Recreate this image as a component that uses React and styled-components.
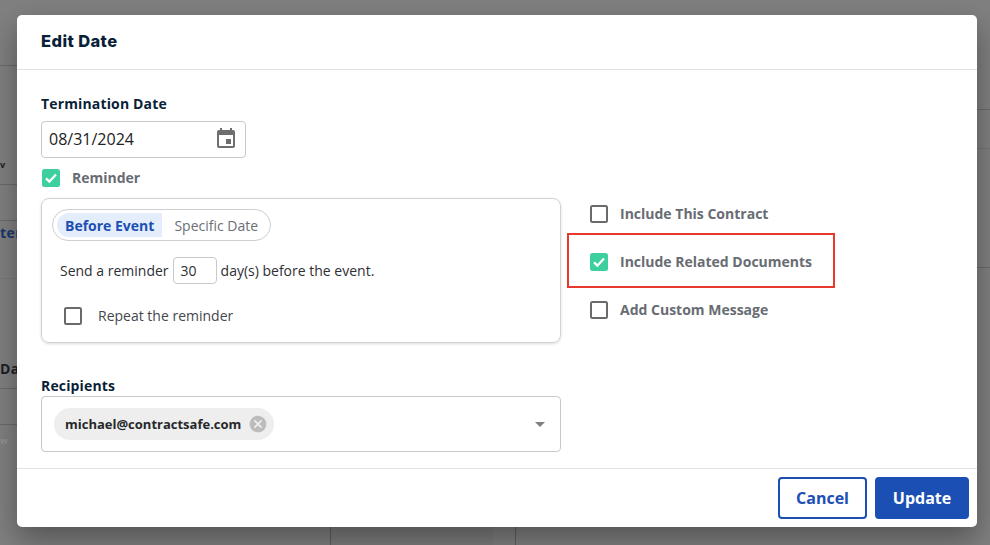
import React from 'react'
import styled, { createGlobalStyle } from 'styled-components'
import { MdEvent, MdCancel, MdArrowDropDown } from 'react-icons/md'

const Global = createGlobalStyle`
  html, body { margin: 0; padding: 0; height: 100%; }
  body { font-family: "Open Sans", "Noto Sans", sans-serif; background: #808080; overflow: hidden; }
  * { box-sizing: border-box; }
`

const Page = styled.div`
  position: relative;
  width: 990px;
  height: 545px;
  overflow: hidden;
  display: flex;
  background: #808080;
`

/* the app behind the overlay, only slivers of it show */
const LeftPane = styled.div`
  width: 330px;
  display: flex;
  flex-direction: column;
`
const MidPane = styled.div`
  width: 186px;
  margin-top: 110px;
  border-left: 1px solid #5f5f5f;
  border-right: 1px solid #5f5f5f;
  padding-right: 22px;
`
const MidShade = styled.div`
  height: 100%;
  background: #00000008;
`
const RightPane = styled.div`
  flex: 1;
  display: flex;
  flex-direction: column;
`
const BackRow = styled.div`
  height: ${p => p.$h}px;
  flex: none;
  border-bottom: 1px solid ${p => p.$line || '#6a6a6a'};
  display: flex;
  align-items: flex-end;
  padding-bottom: ${p => p.$pad || 0}px;
  font-size: ${p => p.$size || 14}px;
  font-weight: 700;
  line-height: 18px;
  letter-spacing: 0.5px;
  color: ${p => p.$color || '#1b1f27'};
`

const Modal = styled.div`
  position: absolute;
  left: 17px;
  top: 15px;
  width: 960px;
  height: 512px;
  background: #fff;
  border-radius: 5px;
  box-shadow: 0 12px 30px rgba(0, 0, 0, 0.36);
  display: flex;
  flex-direction: column;
`
const Header = styled.div`
  height: 55px;
  flex: none;
  padding: 0 24px 2px;
  display: flex;
  align-items: center;
  border-bottom: 1px solid #e2e2e2;
  font-family: Inter, "Noto Sans", sans-serif;
  font-size: 16.5px;
  font-weight: 800;
  letter-spacing: 0.4px;
  color: #0a1f38;
`
const Body = styled.div`
  flex: 1;
  min-height: 0;
  padding: 24px 24px 0;
  display: grid;
  grid-template-columns: 520px 1fr;
  grid-template-rows: auto auto;
  align-content: start;
`
const LeftCol = styled.div`
  display: flex;
  flex-direction: column;
`
const Label = styled.div`
  font-size: 14px;
  font-weight: 700;
  line-height: 20px;
  letter-spacing: 0.15px;
  color: #0a1f38;
  margin-bottom: ${p => p.$gap}px;
  margin-top: ${p => p.$top || 0}px;
`
const DateField = styled.div`
  width: 205px;
  height: 37px;
  border: 1px solid #c9c9c9;
  border-radius: 4px;
  padding: 0 7px;
  display: flex;
  align-items: center;
  justify-content: space-between;
  font-size: 16px;
  color: #222;
  svg { color: #6e6e6e; margin-top: -1px; }
`
const DateText = styled.span`
  margin-bottom: 2px;
`
const CheckRow = styled.div`
  display: flex;
  align-items: center;
  gap: ${p => p.$gap || 12}px;
  font-size: 14px;
  font-weight: ${p => (p.$plain ? 400 : 700)};
  color: ${p => (p.$plain ? '#44474c' : '#686c73')};
`
const RowText = styled.span`
  margin-bottom: 2px;
`
const Box = styled.span`
  width: 18px;
  height: 18px;
  flex: none;
  border-radius: 2.5px;
  display: flex;
  align-items: center;
  justify-content: center;
  background: ${p => (p.$on ? '#3ecf9f' : '#fff')};
  border: ${p => (p.$on ? 'none' : '2px solid #6a6a6a')};
`
const ReminderRow = styled(CheckRow)`
  margin: 10px 0 10px 1px;
  height: 20px;
`
const Card = styled.div`
  width: 520px;
  height: 145px;
  border: 1px solid #d2d2d2;
  border-radius: 8px;
  box-shadow: 0 1px 3px rgba(0, 0, 0, 0.14);
  padding: 10px;
`
const Tabs = styled.div`
  display: flex;
  align-items: center;
  height: 32px;
  width: 219px;
  padding: 0 4px;
  border: 1px solid #cfcfcf;
  border-radius: 16px;
`
const Tab = styled.div`
  height: 24px;
  padding: 0 ${p => (p.$active ? 8 : 12)}px;
  display: flex;
  align-items: center;
  white-space: nowrap;
  font-size: 14px;
  font-weight: ${p => (p.$active ? 700 : 400)};
  color: ${p => (p.$active ? '#1c4fb3' : '#6b6f76')};
  background: ${p => (p.$active ? '#e4edfb' : 'transparent')};
  border-radius: ${p => (p.$active ? '12px 0 0 12px' : '0')};
`
const SendRow = styled.div`
  display: flex;
  align-items: center;
  gap: 4px;
  margin: 16px 0 0 8px;
  font-size: 14px;
  color: #2e3034;
`
const DaysInput = styled.div`
  width: 44px;
  height: 27px;
  border: 1px solid #c9c9c9;
  border-radius: 4px;
  padding-left: 7px;
  display: flex;
  align-items: center;
`
const RepeatRow = styled(CheckRow)`
  margin: 22px 0 0 12px;
`
const RightCol = styled.div`
  padding: 96px 0 0 29px;
  display: flex;
  flex-direction: column;
`
const OptionRow = styled(CheckRow)`
  position: relative;
  width: 245px;
  height: 48px;
  ${p =>
    p.$flag &&
    `&::after {
      content: '';
      position: absolute;
      left: -23px;
      right: 0;
      top: -5px;
      bottom: -2px;
      border: 2px solid #e8392c;
    }`}
`
const RecipientBlock = styled.div`
  grid-column: 1 / 2;
`
const Select = styled.div`
  width: 520px;
  height: 56px;
  border: 1px solid #c9c9c9;
  border-radius: 4px;
  padding: 0 8px 0 12px;
  display: flex;
  align-items: center;
  justify-content: space-between;
  > svg { color: #808080; }
`
const Chip = styled.div`
  height: 32px;
  width: 220px;
  border-radius: 16px;
  background: #eeeeee;
  padding: 0 6px 0 11px;
  display: flex;
  align-items: center;
  justify-content: space-between;
  font-size: 13px;
  font-weight: 700;
  color: #26282b;
  svg { color: #bcbcbc; }
`
const Footer = styled.div`
  height: 59px;
  flex: none;
  border-top: 1px solid #e2e2e2;
  padding: 8px 8px 0 0;
  display: flex;
  justify-content: flex-end;
  gap: 8px;
`
const Button = styled.button`
  width: ${p => (p.$primary ? 94 : 89)}px;
  height: 42px;
  border-radius: 4px;
  border: 2px solid #1c4fb3;
  background: ${p => (p.$primary ? '#1c4fb3' : '#fff')};
  color: ${p => (p.$primary ? '#fff' : '#1c4fb3')};
  font-family: inherit;
  font-size: 16px;
  font-weight: 700;
  padding: 0;
`

const Check = ({ on }) => (
  <Box $on={on}>
    {on && (
      <svg width="14" height="14" viewBox="0 0 14 14" fill="none">
        <path d="M2 7.4 5.4 10.6 12 3.6" stroke="#fff" strokeWidth="2.2" />
      </svg>
    )}
  </Box>
)

export default function App() {
  return (
    <Page>
      <Global />
      <LeftPane>
        <BackRow $h={66} />
        <BackRow $h={119} $pad={10} $size={9}>v</BackRow>
        <BackRow $h={36} />
        <BackRow $h={58} $line="#797979" $pad={36} $color="#1a3670">ter</BackRow>
        <BackRow $h={110} $pad={10}>Da</BackRow>
        <BackRow $h={36} />
        <BackRow $h={26} $size={9} $color="#939393" $line="transparent">w</BackRow>
      </LeftPane>
      <MidPane>
        <MidShade />
      </MidPane>
      <RightPane>
        <BackRow $h={110} />
        <BackRow $h={39} $line="#747474" />
        <BackRow $h={119} $line="#6a6a6a" />
      </RightPane>

      <Modal>
        <Header>Edit Date</Header>
        <Body>
          <LeftCol>
            <Label $gap={7}>Termination Date</Label>
            <DateField>
              <DateText>08/31/2024</DateText>
              <MdEvent size={24} />
            </DateField>
            <ReminderRow>
              <Check on />
              <RowText>Reminder</RowText>
            </ReminderRow>
            <Card>
              <Tabs>
                <Tab $active>Before Event</Tab>
                <Tab>Specific Date</Tab>
              </Tabs>
              <SendRow>
                Send a reminder
                <DaysInput>30</DaysInput>
                day(s) before the event.
              </SendRow>
              <RepeatRow $plain $gap={16}>
                <Check />
                Repeat the reminder
              </RepeatRow>
            </Card>
          </LeftCol>
          <RightCol>
            <OptionRow>
              <Check />
              <RowText>Include This Contract</RowText>
            </OptionRow>
            <OptionRow $flag>
              <Check on />
              <RowText>Include Related Documents</RowText>
            </OptionRow>
            <OptionRow>
              <Check />
              <RowText>Add Custom Message</RowText>
            </OptionRow>
          </RightCol>
          <RecipientBlock>
            <Label $top={33} $gap={0}>Recipients</Label>
            <Select>
              <Chip>
                michael@contractsafe.com
                <MdCancel size={20} />
              </Chip>
              <MdArrowDropDown size={24} />
            </Select>
          </RecipientBlock>
        </Body>
        <Footer>
          <Button>Cancel</Button>
          <Button $primary>Update</Button>
        </Footer>
      </Modal>
    </Page>
  )
}
